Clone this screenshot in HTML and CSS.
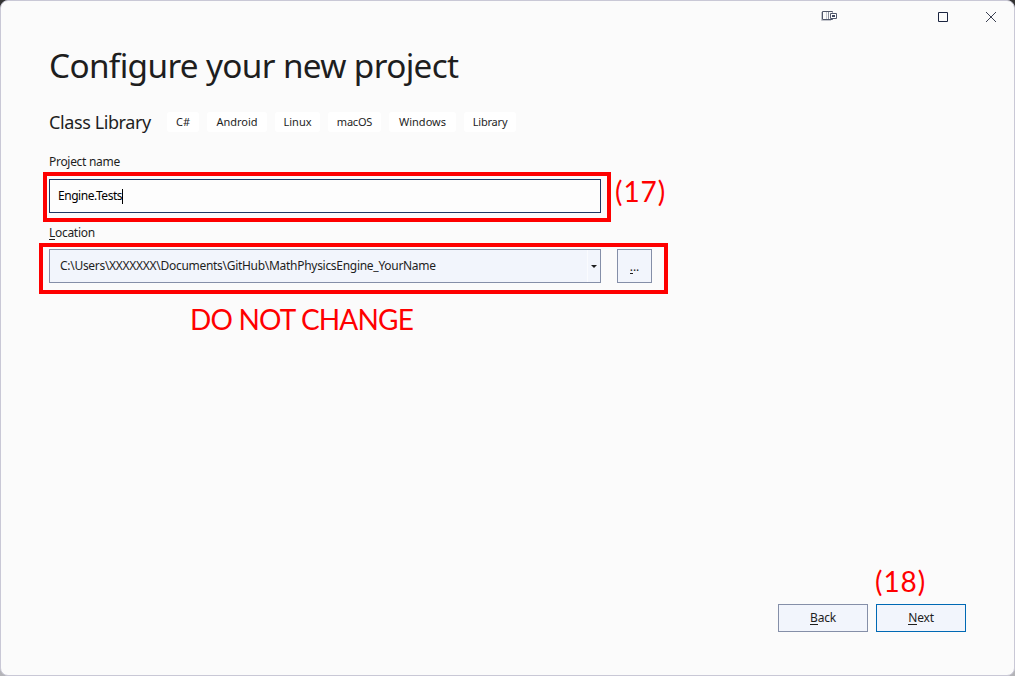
FILE: index.html
```html
<!DOCTYPE html>
<html lang="en">
<head>
<meta charset="utf-8">
<title>Configure your new project</title>
<link rel="stylesheet" href="styles.css">
</head>
<body>
<div class="window">
  <header class="titlebar">
    <svg class="feedback" width="16" height="11" viewBox="0 0 16 11"><path d="M0.5 2V10.500H10" fill="none" stroke="#c3c5cc"/><path d="M11.500 2.500V1.500H1.500V9.500H11.500V8.500" fill="none" stroke="#50576a"/><path d="M5.500 2V9" stroke="#c5c7ce"/><path d="M7.500 2V9" stroke="#8b909e"/><path d="M9.500 3.500H15.500V8.500H9.500Z" fill="#fff" stroke="#50576a"/><path d="M11 5h3v2h-3z" fill="#414960"/></svg>
    <svg class="maximize" width="10" height="10" viewBox="0 0 10 10"><path d="M.5.5h9v9h-9z" fill="none" stroke="#1b2440"/></svg>
    <svg class="close" width="10" height="10" viewBox="0 0 10 10"><path d="M0 0L10 10M10 0L0 10" fill="none" stroke="#3b4052"/></svg>
  </header>
  <main class="content">
    <h1 class="title">Configure your new project</h1>
    <div class="template">
      <h2 class="template-name">Class Library</h2>
      <ul class="tags">
        <li class="tag tag-cs">C#</li>
        <li class="tag tag-android">Android</li>
        <li class="tag tag-linux">Linux</li>
        <li class="tag tag-macos">macOS</li>
        <li class="tag tag-windows">Windows</li>
        <li class="tag tag-library">Library</li>
      </ul>
    </div>
    <div class="label label-name">Project name</div>
    <div class="field name-field"><span class="name-text">Engine.Tests</span><span class="caret"></span></div>
    <div class="label label-location"><u>L</u>ocation</div>
    <div class="location-row">
      <div class="field location-field"><span class="location-text">C:\Users\XXXXXXX\Documents\GitHub\MathPhysicsEngine_YourName</span><span class="dropdown"><svg width="6" height="3" viewBox="0 0 6 3"><path d="M0 0h6L3 3z" fill="#1e1e1e"/></svg></span></div>
      <div class="browse"><u>.</u>..</div>
    </div>
  </main>
  <footer class="actions">
    <div class="button"><span><u>B</u>ack</span></div>
    <div class="button primary"><span><u>N</u>ext</span></div>
  </footer>
</div>
<div class="callout callout-name"></div>
<div class="callout callout-location"></div>
<div class="note note-17">(17)</div>
<div class="note note-keep">DO NOT CHANGE</div>
<div class="note note-18">(18)</div>
</body>
</html>
```
FILE: styles.css
```css
* { box-sizing: border-box; }
body {
  margin: 0;
  width: 1015px;
  height: 676px;
  overflow: hidden;
  background: linear-gradient(#333 50%, #b4b4b8 50%);
  font: 12px/16px "Noto Sans", "Open Sans", sans-serif;
  color: #1e1e1e;
}
svg { display: block; }
u { text-decoration: none; box-shadow: 0 1px 0 #1e1e1e; display: inline-block; line-height: 13px; }
.window {
  width: 1015px;
  height: 676px;
  border: 1px solid #c9c8d6;
  border-radius: 8px;
  background: #fbfbfb;
  display: flex;
  flex-direction: column;
}
.titlebar { display: flex; height: 43px; padding-left: 820px; }
.feedback { margin-top: 9px; }
.maximize { margin: 11px 0 0 101px; }
.close { margin: 11px 0 0 38px; }
.content { flex: 1; padding-left: 48px; }
.title { margin: 0; font-size: 33.3px; line-height: 42px; font-weight: 400; letter-spacing: -.64px; white-space: nowrap; }
.template { display: flex; align-items: center; height: 36px; margin-top: 18px; }
.template-name { margin: 0; width: 118px; font-size: 18px; line-height: 24px; font-weight: 400; letter-spacing: -.4px; white-space: nowrap; }
.tags { display: flex; margin: 0; padding: 0; gap: 8px; list-style: none; }
.tag { height: 20px; border-radius: 3px; background: #fff; font-size: 11px; line-height: 20px; text-align: center; white-space: nowrap; }
.tag-cs { width: 32px; }
.tag-android { width: 60px; }
.tag-linux { width: 45px; }
.tag-macos { width: 53px; letter-spacing: -.2px; }
.tag-windows { width: 67px; }
.tag-library { width: 52px; letter-spacing: -.2px; }
.label { font-size: 12px; line-height: 16px; letter-spacing: -.3px; }
.label-name { margin-top: 14px; }
.label-location { margin-top: 12px; }
.field { display: flex; align-items: center; width: 552px; height: 34px; }
.name-field { margin-top: 9px; padding-left: 8px; border: 1px solid #1f3864; background: #fdfdfd; color: #000; }
.name-text { letter-spacing: -.45px; }
.caret { width: 1px; height: 15px; background: #000; }
.location-row { display: flex; gap: 16px; margin-top: 8px; }
.location-field { justify-content: space-between; padding-left: 10px; border: 1px solid #858fa8; background: #f2f5fc; }
.location-text { letter-spacing: -.29px; white-space: nowrap; }
.dropdown { display: flex; align-items: center; justify-content: center; width: 13px; height: 32px; border-left: 1px solid #fafbfe; }
.browse { width: 35px; height: 34px; border: 1px solid #858fa8; background: #f2f5fc; line-height: 33px; text-align: center; }
.actions { display: flex; justify-content: flex-end; gap: 8px; padding: 0 48px 43px 0; }
.button { width: 90px; height: 28px; border: 1px solid #858fa8; background: #f2f5fc; line-height: 26px; text-align: center; letter-spacing: -.2px; }
.primary { border-color: #0069b4; }
.callout { position: absolute; border: 4px solid #fe0000; }
.callout-name { left: 43px; top: 172px; width: 568px; height: 50px; }
.callout-location { left: 39px; top: 243px; width: 629px; height: 51px; }
.note { position: absolute; color: #f00; font: 28px/36px Lato, sans-serif; letter-spacing: .9px; white-space: nowrap; }
.note-17 { left: 615px; top: 173px; }
.note-keep { left: 190px; top: 301px; letter-spacing: -.82px; }
.note-18 { left: 875px; top: 563px; }
```
